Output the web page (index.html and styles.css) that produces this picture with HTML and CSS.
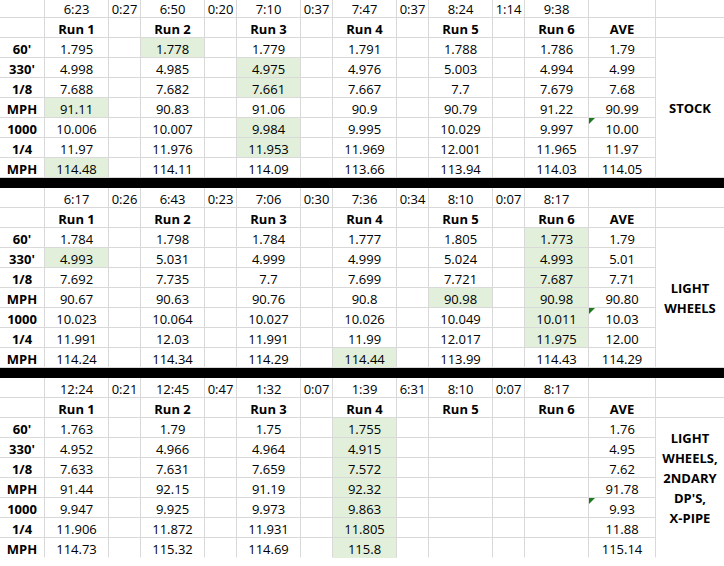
FILE: index.html
```html
<!DOCTYPE html>
<html>
<head>
<meta charset="utf-8">
<link rel="stylesheet" href="styles.css">
</head>
<body>
<div class="sheet">
  <div class="block">
    <div class="c"></div><div class="c">6:23</div><div class="c">0:27</div><div class="c">6:50</div><div class="c">0:20</div><div class="c">7:10</div><div class="c">0:37</div><div class="c">7:47</div><div class="c">0:37</div><div class="c">8:24</div><div class="c">1:14</div><div class="c">9:38</div><div class="c"></div><div class="c n"></div>
    <div class="c"></div><div class="c b">Run 1</div><div class="c"></div><div class="c b">Run 2</div><div class="c"></div><div class="c b">Run 3</div><div class="c"></div><div class="c b">Run 4</div><div class="c"></div><div class="c b">Run 5</div><div class="c"></div><div class="c b">Run 6</div><div class="c b">AVE</div><div class="c n"></div>
    <div class="c note">STOCK</div>
    <div class="c b">60'</div><div class="c">1.795</div><div class="c"></div><div class="c g">1.778</div><div class="c"></div><div class="c">1.779</div><div class="c"></div><div class="c">1.791</div><div class="c"></div><div class="c">1.788</div><div class="c"></div><div class="c">1.786</div><div class="c">1.79</div>
    <div class="c b">330'</div><div class="c">4.998</div><div class="c"></div><div class="c">4.985</div><div class="c"></div><div class="c g">4.975</div><div class="c"></div><div class="c">4.976</div><div class="c"></div><div class="c">5.003</div><div class="c"></div><div class="c">4.994</div><div class="c">4.99</div>
    <div class="c b">1/8</div><div class="c">7.688</div><div class="c"></div><div class="c">7.682</div><div class="c"></div><div class="c g">7.661</div><div class="c"></div><div class="c">7.667</div><div class="c"></div><div class="c">7.7</div><div class="c"></div><div class="c">7.679</div><div class="c">7.68</div>
    <div class="c b">MPH</div><div class="c g">91.11</div><div class="c"></div><div class="c">90.83</div><div class="c"></div><div class="c">91.06</div><div class="c"></div><div class="c">90.9</div><div class="c"></div><div class="c">90.79</div><div class="c"></div><div class="c">91.22</div><div class="c">90.99</div>
    <div class="c b">1000</div><div class="c">10.006</div><div class="c"></div><div class="c">10.007</div><div class="c"></div><div class="c g">9.984</div><div class="c"></div><div class="c">9.995</div><div class="c"></div><div class="c">10.029</div><div class="c"></div><div class="c">9.997</div><div class="c flag">10.00</div>
    <div class="c b">1/4</div><div class="c">11.97</div><div class="c"></div><div class="c">11.976</div><div class="c"></div><div class="c g">11.953</div><div class="c"></div><div class="c">11.969</div><div class="c"></div><div class="c">12.001</div><div class="c"></div><div class="c">11.965</div><div class="c">11.97</div>
    <div class="c b">MPH</div><div class="c g">114.48</div><div class="c"></div><div class="c">114.11</div><div class="c"></div><div class="c">114.09</div><div class="c"></div><div class="c">113.66</div><div class="c"></div><div class="c">113.94</div><div class="c"></div><div class="c">114.03</div><div class="c">114.05</div>
  </div>
  <div class="bar"></div>
  <div class="block">
    <div class="c"></div><div class="c">6:17</div><div class="c">0:26</div><div class="c">6:43</div><div class="c">0:23</div><div class="c">7:06</div><div class="c">0:30</div><div class="c">7:36</div><div class="c">0:34</div><div class="c">8:10</div><div class="c">0:07</div><div class="c">8:17</div><div class="c"></div><div class="c n"></div>
    <div class="c"></div><div class="c b">Run 1</div><div class="c"></div><div class="c b">Run 2</div><div class="c"></div><div class="c b">Run 3</div><div class="c"></div><div class="c b">Run 4</div><div class="c"></div><div class="c b">Run 5</div><div class="c"></div><div class="c b">Run 6</div><div class="c b">AVE</div><div class="c n"></div>
    <div class="c note">LIGHT<br>WHEELS</div>
    <div class="c b">60'</div><div class="c">1.784</div><div class="c"></div><div class="c">1.798</div><div class="c"></div><div class="c">1.784</div><div class="c"></div><div class="c">1.777</div><div class="c"></div><div class="c">1.805</div><div class="c"></div><div class="c g">1.773</div><div class="c">1.79</div>
    <div class="c b">330'</div><div class="c g">4.993</div><div class="c"></div><div class="c">5.031</div><div class="c"></div><div class="c">4.999</div><div class="c"></div><div class="c">4.999</div><div class="c"></div><div class="c">5.024</div><div class="c"></div><div class="c g">4.993</div><div class="c">5.01</div>
    <div class="c b">1/8</div><div class="c">7.692</div><div class="c"></div><div class="c">7.735</div><div class="c"></div><div class="c">7.7</div><div class="c"></div><div class="c">7.699</div><div class="c"></div><div class="c">7.721</div><div class="c"></div><div class="c g">7.687</div><div class="c">7.71</div>
    <div class="c b">MPH</div><div class="c">90.67</div><div class="c"></div><div class="c">90.63</div><div class="c"></div><div class="c">90.76</div><div class="c"></div><div class="c">90.8</div><div class="c"></div><div class="c g">90.98</div><div class="c"></div><div class="c g">90.98</div><div class="c">90.80</div>
    <div class="c b">1000</div><div class="c">10.023</div><div class="c"></div><div class="c">10.064</div><div class="c"></div><div class="c">10.027</div><div class="c"></div><div class="c">10.026</div><div class="c"></div><div class="c">10.049</div><div class="c"></div><div class="c g">10.011</div><div class="c flag">10.03</div>
    <div class="c b">1/4</div><div class="c">11.991</div><div class="c"></div><div class="c">12.03</div><div class="c"></div><div class="c">11.991</div><div class="c"></div><div class="c">11.99</div><div class="c"></div><div class="c">12.017</div><div class="c"></div><div class="c g">11.975</div><div class="c">12.00</div>
    <div class="c b">MPH</div><div class="c">114.24</div><div class="c"></div><div class="c">114.34</div><div class="c"></div><div class="c">114.29</div><div class="c"></div><div class="c g">114.44</div><div class="c"></div><div class="c">113.99</div><div class="c"></div><div class="c">114.43</div><div class="c">114.29</div>
  </div>
  <div class="bar"></div>
  <div class="block last">
    <div class="c"></div><div class="c">12:24</div><div class="c">0:21</div><div class="c">12:45</div><div class="c">0:47</div><div class="c">1:32</div><div class="c">0:07</div><div class="c">1:39</div><div class="c">6:31</div><div class="c">8:10</div><div class="c">0:07</div><div class="c">8:17</div><div class="c"></div><div class="c n"></div>
    <div class="c"></div><div class="c b">Run 1</div><div class="c"></div><div class="c b">Run 2</div><div class="c"></div><div class="c b">Run 3</div><div class="c"></div><div class="c b">Run 4</div><div class="c"></div><div class="c b">Run 5</div><div class="c"></div><div class="c b">Run 6</div><div class="c b">AVE</div><div class="c n"></div>
    <div class="c note up">LIGHT<br>WHEELS,<br>2NDARY<br>DP'S,<br>X-PIPE</div>
    <div class="c b">60'</div><div class="c">1.763</div><div class="c"></div><div class="c">1.79</div><div class="c"></div><div class="c">1.75</div><div class="c"></div><div class="c g">1.755</div><div class="c"></div><div class="c"></div><div class="c"></div><div class="c"></div><div class="c">1.76</div>
    <div class="c b">330'</div><div class="c">4.952</div><div class="c"></div><div class="c">4.966</div><div class="c"></div><div class="c">4.964</div><div class="c"></div><div class="c g">4.915</div><div class="c"></div><div class="c"></div><div class="c"></div><div class="c"></div><div class="c">4.95</div>
    <div class="c b">1/8</div><div class="c">7.633</div><div class="c"></div><div class="c">7.631</div><div class="c"></div><div class="c">7.659</div><div class="c"></div><div class="c g">7.572</div><div class="c"></div><div class="c"></div><div class="c"></div><div class="c"></div><div class="c">7.62</div>
    <div class="c b">MPH</div><div class="c">91.44</div><div class="c"></div><div class="c">92.15</div><div class="c"></div><div class="c">91.19</div><div class="c"></div><div class="c g">92.32</div><div class="c"></div><div class="c"></div><div class="c"></div><div class="c"></div><div class="c">91.78</div>
    <div class="c b">1000</div><div class="c">9.947</div><div class="c"></div><div class="c">9.925</div><div class="c"></div><div class="c">9.973</div><div class="c"></div><div class="c g">9.863</div><div class="c"></div><div class="c"></div><div class="c"></div><div class="c"></div><div class="c flag">9.93</div>
    <div class="c b">1/4</div><div class="c">11.906</div><div class="c"></div><div class="c">11.872</div><div class="c"></div><div class="c">11.931</div><div class="c"></div><div class="c g">11.805</div><div class="c"></div><div class="c"></div><div class="c"></div><div class="c"></div><div class="c">11.88</div>
    <div class="c b">MPH</div><div class="c">114.73</div><div class="c"></div><div class="c">115.32</div><div class="c"></div><div class="c">114.69</div><div class="c"></div><div class="c g">115.8</div><div class="c"></div><div class="c"></div><div class="c"></div><div class="c"></div><div class="c">115.14</div>
  </div>
</div>
</body>
</html>
```

FILE: styles.css
```css
html, body {
  margin: 0;
  padding: 0;
  background: #ffffff;
}
.sheet {
  width: 724px;
  height: 568px;
  margin-top: -2px;
  overflow: hidden;
  font-family: "Open Sans", "Noto Sans", sans-serif;
  font-size: 13px;
  color: #000000;
}
.block {
  display: grid;
  grid-template-columns: 45px 64px 32px 64px 32px 64px 32px 64px 32px 64px 32px 64px 67px 68px;
  grid-auto-rows: 20px;
}
.c {
  box-sizing: border-box;
  min-width: 0;
  border-right: 1px solid #d9d9d9;
  border-bottom: 1px solid #d9d9d9;
  display: flex;
  align-items: center;
  justify-content: center;
  padding-top: 3px;
  white-space: nowrap;
  line-height: 17px;
  position: relative;
}
.c.n {
  border-right: 0;
}
.b {
  font-weight: 700;
}
.g {
  background: #e2efda;
}
.c.note {
  grid-column: 14;
  grid-row: 3 / span 7;
  flex-direction: column;
  font-weight: 700;
  line-height: 20px;
  text-align: center;
  padding-top: 0;
  white-space: nowrap;
  border-right: 0;
}
.c.note.up {
  padding-bottom: 20px;
}
.flag::before {
  content: "";
  position: absolute;
  left: 0;
  top: 0;
  width: 0;
  height: 0;
  border-top: 6px solid #1e7a1e;
  border-right: 6px solid transparent;
}
.last > .c:nth-last-child(-n+13),
.last > .c.note {
  border-bottom-color: transparent;
}
.bar {
  height: 10px;
  background: #000000;
}
```
